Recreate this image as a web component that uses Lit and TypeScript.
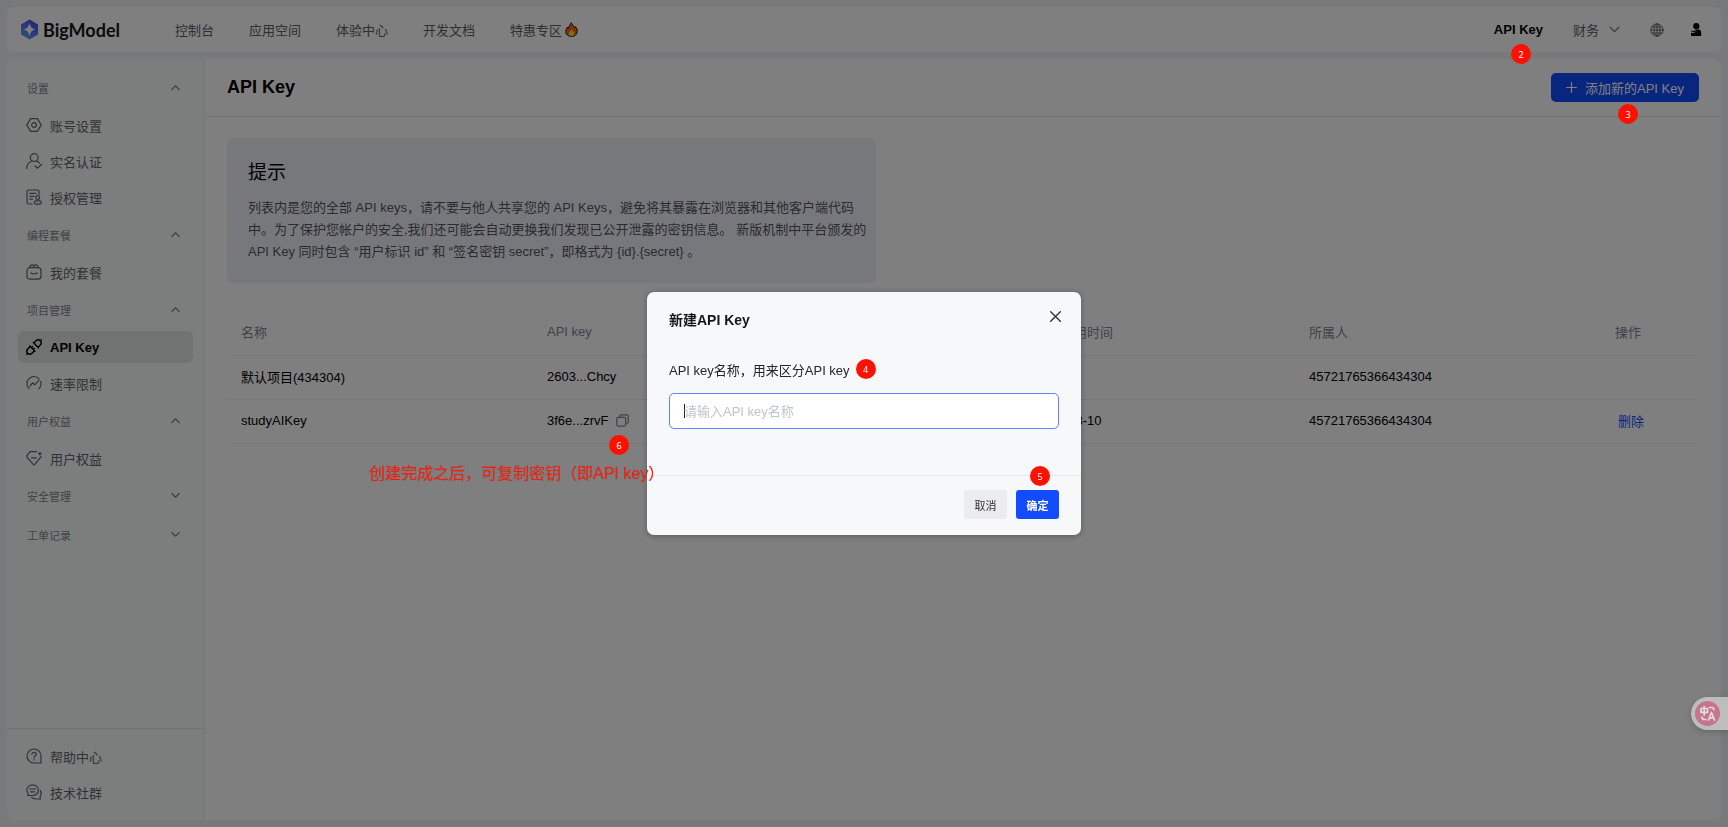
import { LitElement, html, css, svg, nothing } from "lit";
import { customElement, property } from "lit/decorators.js";
import { classMap } from "lit/directives/class-map.js";

const ICONS: Record<string, unknown> = {
  gear: svg`<path d="M4.6 1.6h6.800L15.200 8l-3.800 6.400H4.600L.8 8z"/><circle cx="8" cy="8" r="2.300"/>`,
  verify: svg`<circle cx="8.200" cy="4.600" r="3.900"/><path d="M.8 15.400C.9 11.600 2.900 9.300 5.400 8.300M10.900 8.300c1.100.4 2 1 2.700 1.800M9 13l2.200 2.200 4.300-3.700"/>`,
  grant: svg`<path d="M13 5.500V2.800C13 1.600 12.300 1 11.200 1H2.800C1.600 1 1 1.700 1 2.800v10.400C1 14.400 1.700 15 2.800 15H6M3.800 4.400h6M3.800 7.300h4.400M3.800 10.200h2.600"/><circle cx="11.700" cy="8.600" r="1.900"/><rect x="8.300" y="11.800" width="7" height="3.400" rx="1.600"/>`,
  bag: svg`<rect x="1" y="3.700" width="14" height="11.500" rx="3"/><path d="M4 3.500C4 1.600 5.200.8 6.300.8S8 1.600 8 2.400C8 1.600 8.700.8 9.700.8S12 1.600 12 3.500M4.800 9c1.500 1.300 4.900 1.300 6.400 0"/>`,
  key: svg`<g transform="rotate(45 8 8)"><path d="M8-2.400V-.9M4.400 5.300h7.200M5 5.300V2.100A3 3 0 0 1 8-.9a3 3 0 0 1 3 3V5.300M8 18.400v-1.500M4.400 10.300h7.200M5 10.300v3.600A3 3 0 0 0 8 16.900a3 3 0 0 0 3-3V10.300M6.700 8.700v1.600M9.300 8.700v1.600"/></g>`,
  rate: svg`<path d="M3 13.600C-.2 10.200.4 5.200 3.900 3 7.200.8 11 1.500 13.200 3.900M14.700 6.300c.9 2.700.1 5.300-1.700 7.300M4 11l2.600-3.200 2.200 2L13 5.200"/>`,
  gem: svg`<path d="M10.600 1.600H4L.8 5.800 1 7.200l6.200 7.200c.5.500 1.100.5 1.600 0L15.200 6.600M5.600 7.800h4.800M12.600 3.700h2.600M13.900 2.400v2.600"/>`,
  help: svg`<path d="M15 15H8a7 7 0 1 1 7-7zM5.900 6.300c.1-1.300 1-2 2.200-2 1.300 0 2.200.8 2.200 1.900 0 1.500-2.200 1.700-2.200 3.200M8.100 11.200v.9"/>`,
  chat: svg`<path d="M6.600.9c3.300 0 5.800 2.300 5.800 5.300s-2.500 5.300-5.800 5.300H1.800l.4-1.900C1.200 8.700.8 7.500.8 6.200.8 3.200 3.300.9 6.600.9zM3.700 5h5.800M4.500 7.800h4.200M14.400 6.600c1.200 2 .9 4.300-.4 6l.4 2.400H9.700c-1.600 0-3-.6-4-1.600"/>`,
  globe: svg`<circle cx="8" cy="8" r="7"/><ellipse cx="8" cy="8" rx="3.400" ry="7"/><path d="M1 8h14M8 1v14M2.200 4.600h11.600M2.200 11.400h11.600"/>`,
  copy: svg`<rect x="1" y="4.200" width="10.800" height="10.800" rx="1.500"/><path d="M4.600 4V2.400C4.600 1.500 5.100 1 6 1h7.600c.9 0 1.400.5 1.400 1.400V10c0 .9-.5 1.400-1.400 1.400H12"/>`,
  plus: svg`<path d="M8 1v14M1 8h14"/>`,
  close: svg`<path d="M1 1l14 14M15 1L1 15"/>`,
  up: svg`<path d="M1.500 11.500L8 5l6.500 6.500"/>`,
  down: svg`<path d="M1.500 4.500L8 11l6.500-6.500"/>`,
};

@customElement("line-icon")
class LineIcon extends LitElement {
  @property() name = "";
  @property({ type: Number }) size = 16;
  @property({ type: Number }) weight = 1.2;

  static styles = css`
    :host { display: inline-flex; flex: none; }
    .glyph { fill: none; stroke: currentColor; stroke-linecap: round; stroke-linejoin: round; overflow: visible; }
  `;

  render() {
    return html`<svg class="glyph" viewBox="0 0 16 16" width=${this.size} height=${this.size}
      stroke-width=${this.weight} aria-hidden="true">${ICONS[this.name] ?? nothing}</svg>`;
  }
}

type Item = { icon: string; label: string; active?: boolean };
type Group = { title: string; open: boolean; items: Item[] };

const GROUPS: Group[] = [
  { title: "设置", open: true, items: [
    { icon: "gear", label: "账号设置" },
    { icon: "verify", label: "实名认证" },
    { icon: "grant", label: "授权管理" },
  ] },
  { title: "编程套餐", open: true, items: [{ icon: "bag", label: "我的套餐" }] },
  { title: "项目管理", open: true, items: [
    { icon: "key", label: "API Key", active: true },
    { icon: "rate", label: "速率限制" },
  ] },
  { title: "用户权益", open: true, items: [{ icon: "gem", label: "用户权益" }] },
  { title: "安全管理", open: false, items: [] },
  { title: "工单记录", open: false, items: [] },
];

const FOOT: Item[] = [
  { icon: "help", label: "帮助中心" },
  { icon: "chat", label: "技术社群" },
];

@customElement("side-nav")
class SideNav extends LitElement {
  static styles = css`
    :host { display: flex; flex-direction: column; justify-content: space-between; box-sizing: border-box; background: #f8fbfa; border-right: 1px solid #eaecf1; }
    .groups { display: flex; flex-direction: column; padding: 9px 11px 0; }
    .foot { display: flex; flex-direction: column; padding: 9px 11px 10px; border-top: 1px solid #e2e4ea; }
    .group { display: flex; align-items: center; justify-content: space-between; width: 100%; height: 39px; padding: 0 13px 0 9px; border: 0; background: none; font: inherit; font-size: 11px; color: #83858f; }
    .item { display: flex; align-items: center; gap: 8px; height: 32px; margin: 2px 0; padding: 0 8px; border-radius: 6px; font-size: 13px; color: #62646f; text-decoration: none; }
    .item.active { background: #e3e4e4; color: #000; font-weight: 700; }
  `;

  private item(i: Item) {
    return html`<a href="#" class=${classMap({ item: true, active: !!i.active })}>
      <line-icon name=${i.icon} .weight=${i.active ? 1.4 : 1.2}></line-icon>${i.label}</a>`;
  }

  render() {
    return html`
      <nav class="groups">
        ${GROUPS.map((g) => html`
          <button class="group" aria-expanded=${g.open}>${g.title}
            <line-icon name=${g.open ? "up" : "down"} .size=${9} .weight=${2.2}></line-icon>
          </button>
          ${g.items.map((i) => this.item(i))}`)}
      </nav>
      <nav class="foot">${FOOT.map((i) => this.item(i))}</nav>`;
  }
}

@customElement("key-dialog")
class KeyDialog extends LitElement {
  static styles = css`
    :host { display: block; width: 434px; border-radius: 7px; background: #f7f8fa; box-shadow: 0 1px 6px rgba(0, 0, 0, 0.3); color: #242629; }
    .head { display: flex; align-items: flex-start; justify-content: space-between; padding: 18px 19px 0 22px; }
    .title { margin: 0; font-size: 14px; line-height: 20px; font-weight: 700; color: #15171a; }
    .close { display: flex; padding: 1px; border: 0; background: none; color: #303236; }
    .body { padding: 29px 22px 46px; }
    .row { display: flex; align-items: center; gap: 6px; height: 20px; margin-bottom: 14px; font-size: 13px; }
    .field { display: block; box-sizing: border-box; width: 100%; height: 36px; padding: 0 14px; border: 1px solid #5f86ff; border-radius: 5px; outline: none; font: inherit; font-size: 13px; background: linear-gradient(#222, #222) 14px 10px / 1px 14px no-repeat, #fff; }
    .field::placeholder { color: #c0c4cc; opacity: 1; }
    .actions { display: flex; justify-content: flex-end; gap: 9px; padding: 14px 22px 16px; border-top: 1px solid #e7eaf4; }
    .btn { width: 43px; height: 29px; padding: 0; border: 0; border-radius: 3px; font: inherit; font-size: 11px; background: #ececf0; color: #303236; }
    .primary { position: relative; background: #134cff; color: #fff; font-weight: 700; }
    .mark { display: flex; align-items: center; justify-content: center; width: 20px; height: 20px; border-radius: 50%; background: #ff1000; color: #fff; font: 400 9px "Noto Sans", sans-serif; }
    .over { position: absolute; left: 14px; top: -24px; }
  `;

  render() {
    return html`
      <div class="head">
        <h2 class="title">新建API Key</h2>
        <button class="close" aria-label="关闭"><line-icon name="close" .size=${11} .weight=${2}></line-icon></button>
      </div>
      <div class="body">
        <div class="row"><label for="name">API key名称，用来区分API key</label><span class="mark">4</span></div>
        <input id="name" class="field" type="text" placeholder="请输入API key名称">
      </div>
      <div class="actions">
        <button class="btn">取消</button>
        <button class="btn primary">确定<span class="mark over">5</span></button>
      </div>`;
  }
}

@customElement("app-root")
class AppRoot extends LitElement {
  static styles = css`
    :host { display: block; position: relative; font-family: "Liberation Sans", "Noto Sans CJK SC", sans-serif; font-size: 13px; color: #000; }
    .page { display: flex; flex-direction: column; gap: 7px; box-sizing: border-box; min-height: 100vh; padding: 7px; background: #f0f2f7; }
    .top { display: flex; align-items: center; justify-content: space-between; height: 45px; padding: 0 19px 0 13px; border-radius: 8px; background: #fff; }
    .left, .nav, .right { display: flex; align-items: center; }
    .brand { display: flex; align-items: center; gap: 4px; width: 155px; font: 700 18px Lato, sans-serif; color: #15171d; }
    .nav { gap: 35px; }
    .link { display: flex; align-items: center; gap: 3px; color: #5c5e67; text-decoration: none; white-space: nowrap; }
    .strong { color: #000; font-weight: 700; }
    .right { gap: 30px; }
    .finance { gap: 10px; }
    .icons { display: flex; align-items: center; gap: 26px; color: #54565f; }
    .plain { display: flex; padding: 0; border: 0; background: none; color: inherit; }
    .main { display: grid; grid-template-columns: 198px minmax(0, 1fr); flex: 1; border-radius: 8px; background: #fff; overflow: hidden; }
    .bar { display: flex; align-items: center; justify-content: space-between; height: 58px; box-sizing: border-box; padding: 0 22px; border-bottom: 1px solid #e6e8ee; }
    .heading { margin: 0; font-size: 18px; font-weight: 700; }
    .add { display: flex; align-items: center; gap: 8px; height: 29px; padding: 0 15px; border: 0; border-radius: 5px; background: #134cff; color: #fff; font: inherit; white-space: nowrap; }
    .content { padding: 21px 22px 22px; }
    .tip { box-sizing: border-box; max-width: 649px; padding: 22px 8px 20px 21px; border-radius: 7px; background: #eff1f8; }
    .tip-title { margin: 0 0 11px; font-size: 19px; line-height: 26px; font-weight: 400; }
    .tip-text { margin: 0; line-height: 22px; color: #54565f; }
    .keys { width: 100%; margin-top: 26px; border-collapse: collapse; table-layout: fixed; }
    .keys th, .keys td { box-sizing: border-box; height: 44px; padding: 0 14px 2px; border-bottom: 1px solid #f0f1f5; text-align: left; font-weight: 400; white-space: nowrap; }
    .keys th { height: 46px; padding-bottom: 0; color: #83858f; }
    .c-name { width: 306px; }
    .c-time { width: 244px; }
    .c-used { width: 274px; }
    .c-act { width: 98px; }
    .copyable { display: flex; align-items: center; gap: 8px; color: #83858f; }
    .value { color: #000; }
    .delete { padding: 0 3px; color: #134cff; text-decoration: none; }
    .mask { position: fixed; inset: 0; display: flex; align-items: center; justify-content: center; background: rgba(0, 0, 0, 0.5); }
    .notes { position: absolute; inset: 0; pointer-events: none; }
    .mark { position: absolute; display: flex; align-items: center; justify-content: center; width: 20px; height: 20px; border-radius: 50%; background: #ff1000; color: #fff; font: 400 9px "Noto Sans", sans-serif; }
    .m2 { right: 197px; top: 44px; }
    .m3 { right: 90px; top: 104px; }
    .m6 { left: 609px; top: 435px; }
    .remark { position: absolute; left: 369px; top: 462px; font-size: 16px; line-height: 24px; color: #ff1a0a; text-shadow: 0 0 1px rgba(90, 90, 90, 0.5); white-space: nowrap; }
    .translate { position: fixed; right: 0; top: 697px; width: 37px; height: 33px; padding: 4px; box-sizing: border-box; border: 0; border-radius: 17px 0 0 17px; background: #bdbdbd; box-shadow: 0 2px 6px rgba(0, 0, 0, 0.2); display: flex; align-items: center; }
  `;

  private top() {
    return html`
      <header class="top">
        <div class="left">
          <div class="brand">
            <svg width="19" height="21" viewBox="0 0 19 21" aria-hidden="true">
              <defs><linearGradient id="g" x1="0.900" y1="0" x2="0.200" y2="1">
                <stop offset="0" stop-color="#3a4bf0"/><stop offset="0.550" stop-color="#5a74f2"/><stop offset="1" stop-color="#4fb0ea"/>
              </linearGradient></defs>
              <path fill="url(#g)" fill-rule="evenodd" d="M9.500 0.500L18 5.400v10.200l-8.500 4.900L1 15.600V5.400zM9.500 3.500C8.800 7.600 7.400 9.500 3.800 10.500c3.600 1 5 2.900 5.700 7 .7-4.100 2.100-6 5.700-7-3.600-1-5-2.900-5.700-7z"/>
            </svg>BigModel
          </div>
          <nav class="nav">
            ${["控制台", "应用空间", "体验中心", "开发文档"].map((t) => html`<a class="link" href="#">${t}</a>`)}
            <a class="link" href="#">特惠专区
              <svg width="13" height="15" viewBox="0 0 13 15" aria-hidden="true">
                <path fill="#f4671c" stroke="#2b1a14" d="M6.300.7c.5 2 3 3.200 3.600 5.300.3-.4.400-.8.500-1.400 1.400 1.500 2 3.200 1.900 4.900-.2 3-2.500 4.900-5.800 4.900S.8 12.500.7 9.700c-.1-2 .9-3.300 1.800-4.700.2.700.4 1.200.8 1.600C3.500 4.400 5.400 2.800 6.300.7z"/>
                <path fill="#ffdf3a" d="M6.600 7.300c.3 1.400 2.700 2.400 2.600 4.500-.1 1.400-1.200 2.200-2.700 2.200s-2.700-.8-2.700-2.200c0-1.200.6-1.700.9-2.500.3.400.5.700.9.800-.1-1 .4-2 1-2.800z"/>
              </svg></a>
          </nav>
        </div>
        <div class="right">
          <a class="link strong" href="#">API Key</a>
          <a class="link finance" href="#">财务<line-icon name="down" .size=${11} .weight=${1.5}></line-icon></a>
          <div class="icons">
            <button class="plain" aria-label="语言"><line-icon name="globe" .size=${14} .weight=${1}></line-icon></button>
            <button class="plain" aria-label="账户">
              <svg width="12" height="13" viewBox="0 0 12 13" aria-hidden="true">
                <circle cx="6.300" cy="3.200" r="3.100" fill="#000"/>
                <path fill="#000" d="M1.200 7.400c2 .9 3.600.7 5.400-.9H9c1.500.6 2.200 1.700 2.200 3.500v3H1V9.800c2.900.4 4.600-.2 6.200-2-1.900 1.300-3.900 1.500-6 .7z"/>
              </svg>
            </button>
          </div>
        </div>
      </header>`;
  }

  private table() {
    return html`
      <table class="keys">
        <colgroup><col class="c-name"><col class="c-time"><col class="c-time"><col class="c-used"><col class="c-name"><col class="c-act"></colgroup>
        <thead><tr><th>名称</th><th>API key</th><th>创建时间</th><th>最近使用时间</th><th>所属人</th><th>操作</th></tr></thead>
        <tbody>
          <tr><td>默认项目(434304)</td><td>2603...Chcy</td><td></td><td></td><td>45721765366434304</td><td></td></tr>
          <tr><td>studyAIKey</td>
            <td><div class="copyable"><span class="value">3f6e...zrvF</span>
              <button class="plain" aria-label="复制"><line-icon name="copy" .size=${13} .weight=${1.5}></line-icon></button></div></td>
            <td></td><td>2026-03-10</td><td>45721765366434304</td><td><a class="delete" href="#">删除</a></td></tr>
        </tbody>
      </table>`;
  }

  render() {
    return html`
      <div class="page">
        ${this.top()}
        <div class="main">
          <side-nav></side-nav>
          <main>
            <div class="bar">
              <h1 class="heading">API Key</h1>
              <button class="add"><line-icon name="plus" .size=${11} .weight=${1.8}></line-icon>添加新的API Key</button>
            </div>
            <div class="content">
              <section class="tip">
                <h2 class="tip-title">提示</h2>
                <p class="tip-text">列表内是您的全部 API keys，请不要与他人共享您的 API Keys，避免将其暴露在浏览器和其他客户端代码中。为了保护您帐户的安全,我们还可能会自动更换我们发现已公开泄露的密钥信息。 新版机制中平台颁发的 API Key 同时包含 “用户标识 id” 和 “签名密钥 secret”，即格式为 {id}.{secret} 。</p>
              </section>
              ${this.table()}
            </div>
          </main>
        </div>
      </div>
      <div class="mask"><key-dialog role="dialog" aria-modal="true" aria-label="新建API Key"></key-dialog></div>
      <div class="notes">
        <span class="mark m2">2</span>
        <span class="mark m3">3</span>
        <span class="mark m6">6</span>
        <span class="remark">创建完成之后，可复制密钥（即API key）</span>
      </div>
      <button class="translate" aria-label="翻译">
        <svg width="25" height="25" viewBox="0 0 25 25" aria-hidden="true">
          <circle cx="12.500" cy="12.500" r="12.500" fill="#c5758c"/>
          <g fill="none" stroke="#e6dcdf" stroke-width="1.700" stroke-linecap="round" stroke-linejoin="round">
            <path d="M6 7.500h6.500v3.800H6zM9.200 5.500v8.500M14.500 6.500h2c1.500 0 2.300.8 2.300 2.300M7 16c0 1.600.8 2.500 2.300 2.500h1.500M13.500 19l3-7.500 3 7.500M14.600 16.800h3.900"/>
          </g>
        </svg>
      </button>`;
  }
}
